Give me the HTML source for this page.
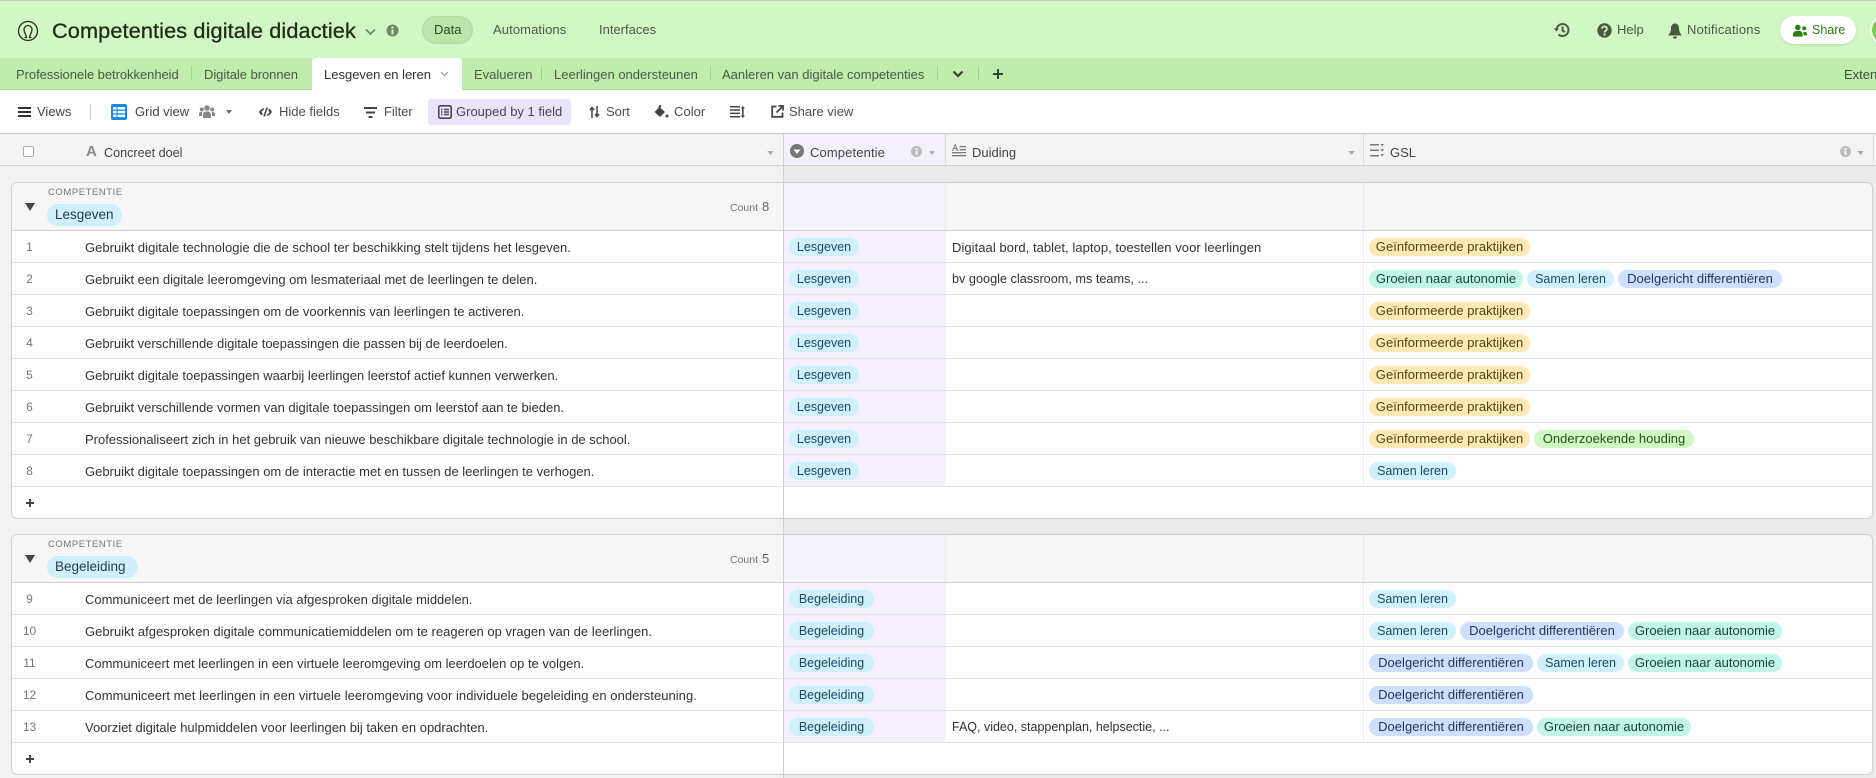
<!DOCTYPE html>
<html><head><meta charset="utf-8"><style>
html,body{margin:0;padding:0;width:1876px;height:778px;overflow:hidden;background:#f2f2f2;font-family:"Liberation Sans",sans-serif;color:#333}
.a{position:absolute}
.t{position:absolute;white-space:nowrap;font-size:13px;line-height:18px;height:18px}
svg{position:absolute;display:block}
.g{color:#4a5a44}
.tb{color:#4d4d4d}
.r{position:absolute;left:12px;width:1860px;background:#fff;border-bottom:1px solid #e3e3e3;box-sizing:content-box;height:31px}
.n{position:absolute;left:0;width:35px;text-align:center;font-size:12px;line-height:33px;color:#777}
.d{position:absolute;left:73px;font-size:13px;line-height:33px;white-space:nowrap;color:#333;letter-spacing:-.01px}
.c{position:absolute;left:772px;width:162px;height:31px;background:#f4f1fc}
.u{position:absolute;left:940px;font-size:13px;line-height:33px;white-space:nowrap;color:#333;letter-spacing:.05px}
.v{position:absolute;left:1351px;width:1px;height:31px;top:0;background:#eee}
.ps{position:absolute;left:1357px;top:7px;display:flex;gap:4px;height:18px}
.p{display:block;height:18px;line-height:18px;border-radius:9px;font-size:12.5px;text-align:center;white-space:nowrap}
.pc{position:absolute;left:777px;top:7px}
.s{width:87px;background:#d0f0fd;color:#1d4a5e}
.dd{width:164px;background:#cfdfff;color:#25355e;font-size:13px;letter-spacing:.03px}
.gr{width:154px;background:#c2f5e9;color:#16483b;font-size:13px}
.gi{width:161px;background:#ffeab6;color:#55400f;font-size:13px;letter-spacing:.03px}
.o{width:160px;background:#d1f7c4;color:#27501a;font-size:13px}
.l{width:70px;background:#d0f0fd;color:#1d4a5e}
.b{width:85px;background:#d0f0fd;color:#1d4a5e}
</style></head><body>
<div class="a" style="left:0;top:0;width:1876px;height:58px;background:#d1f7c4;border-top:1px solid #c6cfc3;box-sizing:border-box"></div>
<div class="a" style="left:0;top:58px;width:1876px;height:32px;background:#c0ecad;border-bottom:1px solid #aed69e;box-sizing:border-box"></div>
<div class="a" style="left:0;top:90px;width:1876px;height:44px;background:#fff;border-bottom:1px solid #ccc;box-sizing:border-box"></div>
<div class="a" style="left:0;top:134px;width:1876px;height:32px;background:#f4f4f4;border-bottom:1px solid #d2d2d2;box-sizing:border-box"></div>
<div class="a" style="left:784px;top:134px;width:161px;height:31px;background:#f4f1fc"></div>
<div class="a" style="left:784px;top:166px;width:1092px;height:612px;background:#ebebeb"></div>

<!-- top bar -->
<svg style="left:17px;top:20px" width="22" height="22" viewBox="0 0 22 22" fill="none" stroke="#2b2b1f" stroke-width="1.3"><circle cx="11" cy="11" r="9.5"/><path d="M7.5 17.5H9.5C9.5 15 7 13 7 9.5a4 4 0 0 1 8 0C15 13 12.500 15 12.500 17.500H14.500"/></svg>
<div class="t" style="left:52px;top:18px;font-size:21.7px;line-height:26px;height:26px;color:#1f2a17;-webkit-text-stroke:.3px #1f2a17;letter-spacing:.12px">Competenties digitale didactiek</div>
<svg style="left:365px;top:28px" width="11" height="8" viewBox="0 0 11 8" fill="none" stroke="#6b8a62" stroke-width="1.8"><path d="M1 1.500L5.500 6L10 1.500"/></svg>
<svg style="left:386px;top:24px" width="13" height="13" viewBox="0 0 13 13"><circle cx="6.500" cy="6.500" r="6" fill="#6f8a66"/><rect x="5.500" y="5.500" width="2" height="5" fill="#d1f7c4"/><rect x="5.500" y="2.500" width="2" height="2" fill="#d1f7c4"/></svg>
<div class="a" style="left:422px;top:16px;width:51px;height:28px;border-radius:14px;background:#bce5ab;box-shadow:inset 0 0 0 1px #b0dba0"></div>
<div class="t g" style="left:434px;top:21px;color:#2d4a23">Data</div>
<div class="t g" style="left:493px;top:21px;letter-spacing:.1px">Automations</div>
<div class="t g" style="left:599px;top:21px">Interfaces</div>

<svg style="left:1553px;top:22px" width="17" height="16" viewBox="0 0 17 16" fill="none" stroke="#4a5a40" stroke-width="2"><path d="M3.500 8a6 6 0 1 1 2 4.500"/><path d="M9.500 4.500V8.500L12 10"/><path d="M0.800 6.500H6L3.500 9.500Z" fill="#4a5a40" stroke="none"/></svg>
<svg style="left:1597px;top:23px" width="15" height="15" viewBox="0 0 15 15"><circle cx="7.500" cy="7.500" r="7.200" fill="#4a5a40"/><path d="M5 5.700a2.500 2.300 0 1 1 3.500 2.200c-.8.400-1 .7-1 1.600" fill="none" stroke="#d1f7c4" stroke-width="1.700"/><rect x="6.500" y="10.500" width="2" height="2" fill="#d1f7c4"/></svg>
<div class="t g" style="left:1617px;top:21px">Help</div>
<svg style="left:1668px;top:23px" width="14" height="16" viewBox="0 0 14 16" fill="#4a5a40"><path d="M7 .5C4 .5 3 3 3 5.500C3 9 1 10.500 .5 12.500H13.500C13 10.500 11 9 11 5.500C11 3 10 .5 7 .5Z"/><rect x="5" y="13.500" width="4" height="2" rx="1"/></svg>
<div class="t g" style="left:1687px;top:21px;letter-spacing:.2px">Notifications</div>
<div class="a" style="left:1780px;top:16px;width:76px;height:28px;border-radius:14px;background:#fff;box-shadow:0 1px 2px rgba(0,0,0,.12)"></div>
<svg style="left:1793px;top:24px" width="14" height="13" viewBox="0 0 16 14" fill="#2d7f12"><circle cx="5.500" cy="3.500" r="3.200"/><path d="M0 14V11a4 4 0 0 1 4-3.500H7A4 4 0 0 1 11 11V14Z"/><circle cx="12.800" cy="4.500" r="2.200"/><path d="M12 8.500h1.500a2.500 2.500 0 0 1 2.500 2.500V12.500H12Z"/></svg>
<div class="t" style="left:1812px;top:21px;color:#2d7f12;font-size:12.5px">Share</div>
<div class="a" style="left:1872px;top:17px;width:26px;height:26px;border-radius:50%;background:#7bc950;box-shadow:0 0 0 2px #fff"></div>

<!-- tabs -->
<div class="t g" style="left:16px;top:66px;letter-spacing:-.05px">Professionele betrokkenheid</div>
<div class="a" style="left:191px;top:66px;width:1px;height:14px;background:#a6d195"></div>
<div class="t g" style="left:204px;top:66px;letter-spacing:-.05px">Digitale bronnen</div>
<div class="a" style="left:312px;top:58px;width:150px;height:33px;background:#fff;border-radius:3px 3px 0 0"></div>
<div class="t" style="left:324px;top:66px;color:#333">Lesgeven en leren</div>
<svg style="left:440px;top:71px" width="9" height="6" viewBox="0 0 9 6" fill="none" stroke="#999" stroke-width="1.200"><path d="M1 1L4.500 4.500L8 1"/></svg>
<div class="t g" style="left:474px;top:66px">Evalueren</div>
<div class="a" style="left:541px;top:66px;width:1px;height:14px;background:#a6d195"></div>
<div class="t g" style="left:554px;top:66px">Leerlingen ondersteunen</div>
<div class="a" style="left:710px;top:66px;width:1px;height:14px;background:#a6d195"></div>
<div class="t g" style="left:722px;top:66px">Aanleren van digitale competenties</div>
<div class="a" style="left:937px;top:66px;width:1px;height:14px;background:#a6d195"></div>
<svg style="left:952px;top:70px" width="12" height="8" viewBox="0 0 12 8" fill="none" stroke="#33452c" stroke-width="2.200"><path d="M1.500 1.500L6 6L10.500 1.500"/></svg>
<div class="a" style="left:978px;top:66px;width:1px;height:14px;background:#a6d195"></div>
<svg style="left:992px;top:68px" width="12" height="12" viewBox="0 0 12 12" fill="none" stroke="#33452c" stroke-width="2"><path d="M6 1V11M1 6H11"/></svg>
<div class="t g" style="left:1844px;top:66px;color:#3f5138">Extensions</div>

<!-- toolbar -->
<svg style="left:18px;top:107px" width="13" height="10" viewBox="0 0 13 10" fill="#333"><rect width="13" height="2"/><rect y="4" width="13" height="2"/><rect y="8" width="13" height="2"/></svg>
<div class="t" style="left:37px;top:103px;color:#444;font-size:13px">Views</div>
<div class="a" style="left:90px;top:104px;width:1px;height:16px;background:#ccc"></div>
<svg style="left:111px;top:104px" width="16" height="16" viewBox="0 0 16 16"><rect width="16" height="16" rx="2" fill="#1c87e0"/><g fill="#fff"><rect x="2" y="3" width="3.500" height="2.500"/><rect x="6.500" y="3" width="7.500" height="2.500"/><rect x="2" y="6.800" width="3.500" height="2.500"/><rect x="6.500" y="6.800" width="7.500" height="2.500"/><rect x="2" y="10.600" width="3.500" height="2.500"/><rect x="6.500" y="10.600" width="7.500" height="2.500"/></g></svg>
<div class="t tb" style="left:135px;top:103px;color:#444">Grid view</div>
<svg style="left:199px;top:105px" width="16" height="13" viewBox="0 0 16 13" fill="#888"><circle cx="8" cy="3" r="2.800"/><circle cx="2.800" cy="4.500" r="2"/><circle cx="13.200" cy="4.500" r="2"/><path d="M4 13V9.500a3 3 0 0 1 3-3H9a3 3 0 0 1 3 3V13Z"/><path d="M0 11V8.500Q0 7 2 7H3V11ZM16 11V8.500Q16 7 14 7H13V11Z"/></svg>
<svg style="left:226px;top:110px" width="6" height="4" viewBox="0 0 8 5" fill="#666"><path d="M0 0H8L4 5Z"/></svg>
<svg style="left:259px;top:107px" width="13" height="10" viewBox="0 0 13 10"><path d="M0 5Q2 1.500 5.500 1L4.500 3Q3 3.500 2.500 5Q3 6 3.800 6.500L3 8.500Q1 7.500 0 5ZM13 5Q11 8.500 7.500 9L8.500 7Q10 6.500 10.500 5Q10 4 9.200 3.500L10 1.500Q12 2.500 13 5Z" fill="#444"/><path d="M8.200 .5L5 9.500" stroke="#444" stroke-width="1.600"/></svg>
<div class="t tb" style="left:279px;top:103px">Hide fields</div>
<svg style="left:364px;top:107px" width="13" height="11" viewBox="0 0 13 11" fill="#444"><rect width="13" height="2"/><rect x="2" y="4.500" width="9" height="2"/><rect x="4.500" y="9" width="4" height="2"/></svg>
<div class="t tb" style="left:384px;top:103px;letter-spacing:-.05px">Filter</div>
<div class="a" style="left:428px;top:99px;width:143px;height:26px;background:#ebe3fa;border-radius:3px"></div>
<svg style="left:438px;top:105px" width="14" height="14" viewBox="0 0 14 14" fill="none" stroke="#4a4650" stroke-width="1.600"><rect x=".8" y=".8" width="12.400" height="12.400" rx="1.500"/><path d="M3 4.500H4.500M6 4.500H11M3 7H4.500M6 7H11M3 9.500H4.500M6 9.500H11"/></svg>
<div class="t tb" style="left:456px;top:103px;color:#4a4650">Grouped by 1 field</div>
<svg style="left:589px;top:106px" width="11" height="12" viewBox="0 0 11 12" fill="none" stroke="#444" stroke-width="1.500"><path d="M3 12V2M1 4L3 1.500L5 4M8 0V10M6 8L8 10.500L10 8"/></svg>
<div class="t tb" style="left:606px;top:103px">Sort</div>
<svg style="left:654px;top:104px" width="15" height="15" viewBox="0 0 15 15" fill="#444"><path d="M5.500 3L11 8L6 13L.5 8Z"/><circle cx="13" cy="12" r="1.500"/><path d="M4 3.500L5.500 1H7.500L6.500 4Z"/></svg>
<div class="t tb" style="left:674px;top:103px;letter-spacing:.05px">Color</div>
<svg style="left:730px;top:106px" width="15" height="12" viewBox="0 0 15 12" fill="#444"><rect width="10" height="1.500"/><rect y="3.300" width="10" height="1.500"/><rect y="6.600" width="10" height="1.500"/><rect y="10" width="10" height="1.500"/><rect x="12" y="2" width="1.600" height="8"/><path d="M12.800 0L15 2.500H10.600ZM12.800 12L15 9.500H10.600Z"/></svg>
<svg style="left:771px;top:105px" width="13" height="13" viewBox="0 0 13 13" fill="none" stroke="#444" stroke-width="1.800"><path d="M5.500 1.500H1.200V11.800H11.500V7.500"/><path d="M5.500 7.500L11 2"/><path d="M7.500 .9H12V5.500" stroke-width="1.800"/></svg>
<div class="t tb" style="left:789px;top:103px">Share view</div>

<!-- header -->
<div class="a" style="left:23px;top:146px;width:9px;height:9px;border:1px solid #aaa;border-radius:2px;background:#fff"></div>
<div class="t" style="left:86px;top:143px;font-size:15px;color:#888;font-weight:bold;line-height:18px">A</div>
<div class="t" style="left:104px;top:144px;font-size:12.6px;color:#444">Concreet doel</div>
<svg style="left:767px;top:151px" width="7" height="4" viewBox="0 0 8 5" fill="#aaa"><path d="M0 0H8L4 5Z"/></svg>
<div class="a" style="left:783px;top:134px;width:1px;height:644px;background:#cfcfcf"></div>
<div class="a" style="left:945px;top:134px;width:1px;height:32px;background:#ddd"></div>
<div class="a" style="left:1363px;top:134px;width:1px;height:32px;background:#ddd"></div>
<div class="a" style="left:1873px;top:134px;width:1px;height:32px;background:#ddd"></div>
<svg style="left:790px;top:144px" width="14" height="14" viewBox="0 0 14 14"><circle cx="7" cy="7" r="7" fill="#777"/><path d="M3.500 5.500H10.500L7 10Z" fill="#fff"/></svg>
<div class="t" style="left:810px;top:144px;font-size:13px;color:#444;letter-spacing:.12px">Competentie</div>
<svg style="left:911px;top:146px" width="11" height="11" viewBox="0 0 11 11"><circle cx="5.500" cy="5.500" r="5.500" fill="#bbb"/><rect x="4.500" y="4.500" width="2" height="4.500" fill="#f4f1fc"/><rect x="4.500" y="2" width="2" height="1.800" fill="#f4f1fc"/></svg>
<svg style="left:929px;top:151px" width="6" height="4" viewBox="0 0 8 5" fill="#aaa"><path d="M0 0H8L4 5Z"/></svg>
<svg style="left:952px;top:144px" width="14" height="13" viewBox="0 0 14 13" fill="#777"><path d="M3 0L0 7H1.300L2 5H4.200L5 7H6.200L3.500 0ZM2.300 4L3.100 1.800L3.900 4Z"/><rect x="7.500" y="2" width="6.500" height="1.300"/><rect x="7.500" y="5" width="6.500" height="1.300"/><rect y="8" width="14" height="1.300"/><rect y="11" width="14" height="1.300"/></svg>
<div class="t" style="left:972px;top:144px;font-size:13px;color:#444">Duiding</div>
<svg style="left:1348px;top:151px" width="7" height="4" viewBox="0 0 8 5" fill="#aaa"><path d="M0 0H8L4 5Z"/></svg>
<svg style="left:1370px;top:144px" width="14" height="13" viewBox="0 0 14 13" fill="#777"><rect width="9" height="1.500"/><rect y="5.500" width="9" height="1.500"/><rect y="11" width="9" height="1.500"/><path d="M10.500 0H14L12.200 2.500ZM10.500 5H14L12.200 7.500ZM10.500 10H14L12.200 12.500Z"/></svg>
<div class="t" style="left:1390px;top:144px;font-size:13px;color:#444">GSL</div>
<svg style="left:1840px;top:146px" width="11" height="11" viewBox="0 0 11 11"><circle cx="5.500" cy="5.500" r="5.500" fill="#bbb"/><rect x="4.500" y="4.500" width="2" height="4.500" fill="#f4f4f4"/><rect x="4.500" y="2" width="2" height="1.800" fill="#f4f4f4"/></svg>
<svg style="left:1857px;top:151px" width="7" height="4" viewBox="0 0 8 5" fill="#aaa"><path d="M0 0H8L4 5Z"/></svg>

<!-- GROUP 1 -->
<div class="a" style="left:11px;top:182px;width:1862px;height:337px;border:1px solid #cfcfcf;border-radius:6px;box-sizing:border-box;background:#fff;overflow:hidden">
  <div class="a" style="left:0;top:0;width:100%;height:47px;background:#f6f6f6;border-bottom:1px solid #d2d2d2"></div>
  <div class="a" style="left:771px;top:0;width:162px;height:47px;background:#f4f3f9"></div>
  <div class="a" style="left:933px;top:0;width:1px;height:47px;background:#eaeaea"></div>
  <div class="a" style="left:1351px;top:0;width:1px;height:47px;background:#eaeaea"></div>
</div>
<svg style="left:25px;top:203px" width="10" height="8" viewBox="0 0 10 8" fill="#444"><path d="M0 0H10L5 8Z"/></svg>
<div class="t" style="left:48px;top:184px;font-size:9.500px;color:#777;letter-spacing:.55px">COMPETENTIE</div>
<div class="a" style="left:47px;top:204px;width:75px;height:22px;border-radius:11px;background:#d0f0fd"></div>
<div class="t" style="left:55px;top:206px;font-size:13.500px;color:#1d3a4e">Lesgeven</div>
<div class="t" style="left:730px;top:198px;font-size:10.500px;color:#777">Count <span style="font-size:13px;color:#666;margin-left:1px">8</span></div>

<div class="r" style="top:231px"><div class="n">1</div><div class="d" style="letter-spacing:.02px">Gebruikt digitale technologie die de school ter beschikking stelt tijdens het lesgeven.</div><div class="c"></div><div class="p pc l">Lesgeven</div><div class="u">Digitaal bord, tablet, laptop, toestellen voor leerlingen</div><div class="v"></div><div class="ps"><span class="p gi">Geïnformeerde praktijken</span></div></div>
<div class="r" style="top:263px"><div class="n">2</div><div class="d">Gebruikt een digitale leeromgeving om lesmateriaal met de leerlingen te delen.</div><div class="c"></div><div class="p pc l">Lesgeven</div><div class="u" style="font-size:12.7px;letter-spacing:0">bv google classroom, ms teams, ...</div><div class="v"></div><div class="ps"><span class="p gr">Groeien naar autonomie</span><span class="p s">Samen leren</span><span class="p dd">Doelgericht differentiëren</span></div></div>
<div class="r" style="top:295px"><div class="n">3</div><div class="d">Gebruikt digitale toepassingen om de voorkennis van leerlingen te activeren.</div><div class="c"></div><div class="p pc l">Lesgeven</div><div class="v"></div><div class="ps"><span class="p gi">Geïnformeerde praktijken</span></div></div>
<div class="r" style="top:327px"><div class="n">4</div><div class="d">Gebruikt verschillende digitale toepassingen die passen bij de leerdoelen.</div><div class="c"></div><div class="p pc l">Lesgeven</div><div class="v"></div><div class="ps"><span class="p gi">Geïnformeerde praktijken</span></div></div>
<div class="r" style="top:359px"><div class="n">5</div><div class="d">Gebruikt digitale toepassingen waarbij leerlingen leerstof actief kunnen verwerken.</div><div class="c"></div><div class="p pc l">Lesgeven</div><div class="v"></div><div class="ps"><span class="p gi">Geïnformeerde praktijken</span></div></div>
<div class="r" style="top:391px"><div class="n">6</div><div class="d">Gebruikt verschillende vormen van digitale toepassingen om leerstof aan te bieden.</div><div class="c"></div><div class="p pc l">Lesgeven</div><div class="v"></div><div class="ps"><span class="p gi">Geïnformeerde praktijken</span></div></div>
<div class="r" style="top:423px"><div class="n">7</div><div class="d">Professionaliseert zich in het gebruik van nieuwe beschikbare digitale technologie in de school.</div><div class="c"></div><div class="p pc l">Lesgeven</div><div class="v"></div><div class="ps"><span class="p gi">Geïnformeerde praktijken</span><span class="p o">Onderzoekende houding</span></div></div>
<div class="r" style="top:455px"><div class="n">8</div><div class="d">Gebruikt digitale toepassingen om de interactie met en tussen de leerlingen te verhogen.</div><div class="c"></div><div class="p pc l">Lesgeven</div><div class="v"></div><div class="ps"><span class="p s">Samen leren</span></div></div>
<svg style="left:26px;top:499px" width="8" height="8" viewBox="0 0 10 10" fill="none" stroke="#444" stroke-width="2.400"><path d="M5 0V10M0 5H10"/></svg>

<!-- GROUP 2 -->
<div class="a" style="left:11px;top:534px;width:1862px;height:241px;border:1px solid #cfcfcf;border-radius:6px;box-sizing:border-box;background:#fff;overflow:hidden">
  <div class="a" style="left:0;top:0;width:100%;height:47px;background:#f6f6f6;border-bottom:1px solid #d2d2d2"></div>
  <div class="a" style="left:771px;top:0;width:162px;height:47px;background:#f4f3f9"></div>
  <div class="a" style="left:933px;top:0;width:1px;height:47px;background:#eaeaea"></div>
  <div class="a" style="left:1351px;top:0;width:1px;height:47px;background:#eaeaea"></div>
</div>
<svg style="left:25px;top:555px" width="10" height="8" viewBox="0 0 10 8" fill="#444"><path d="M0 0H10L5 8Z"/></svg>
<div class="t" style="left:48px;top:536px;font-size:9.500px;color:#777;letter-spacing:.55px">COMPETENTIE</div>
<div class="a" style="left:47px;top:556px;width:91px;height:22px;border-radius:11px;background:#d0f0fd"></div>
<div class="t" style="left:55px;top:558px;font-size:13.500px;color:#1d3a4e">Begeleiding</div>
<div class="t" style="left:730px;top:550px;font-size:10.500px;color:#777">Count <span style="font-size:13px;color:#666;margin-left:1px">5</span></div>

<div class="r" style="top:583px"><div class="n">9</div><div class="d">Communiceert met de leerlingen via afgesproken digitale middelen.</div><div class="c"></div><div class="p pc b">Begeleiding</div><div class="v"></div><div class="ps"><span class="p s">Samen leren</span></div></div>
<div class="r" style="top:615px"><div class="n">10</div><div class="d" style="letter-spacing:.02px">Gebruikt afgesproken digitale communicatiemiddelen om te reageren op vragen van de leerlingen.</div><div class="c"></div><div class="p pc b">Begeleiding</div><div class="v"></div><div class="ps"><span class="p s">Samen leren</span><span class="p dd">Doelgericht differentiëren</span><span class="p gr">Groeien naar autonomie</span></div></div>
<div class="r" style="top:647px"><div class="n">11</div><div class="d">Communiceert met leerlingen in een virtuele leeromgeving om leerdoelen op te volgen.</div><div class="c"></div><div class="p pc b">Begeleiding</div><div class="v"></div><div class="ps"><span class="p dd">Doelgericht differentiëren</span><span class="p s">Samen leren</span><span class="p gr">Groeien naar autonomie</span></div></div>
<div class="r" style="top:679px"><div class="n">12</div><div class="d" style="letter-spacing:.04px">Communiceert met leerlingen in een virtuele leeromgeving voor individuele begeleiding en ondersteuning.</div><div class="c"></div><div class="p pc b">Begeleiding</div><div class="v"></div><div class="ps"><span class="p dd">Doelgericht differentiëren</span></div></div>
<div class="r" style="top:711px"><div class="n">13</div><div class="d">Voorziet digitale hulpmiddelen voor leerlingen bij taken en opdrachten.</div><div class="c"></div><div class="p pc b">Begeleiding</div><div class="u" style="font-size:12.5px;letter-spacing:0">FAQ, video, stappenplan, helpsectie, ...</div><div class="v"></div><div class="ps"><span class="p dd">Doelgericht differentiëren</span><span class="p gr">Groeien naar autonomie</span></div></div>
<svg style="left:26px;top:755px" width="8" height="8" viewBox="0 0 10 10" fill="none" stroke="#444" stroke-width="2.400"><path d="M5 0V10M0 5H10"/></svg>

<div class="a" style="left:783px;top:166px;width:1px;height:612px;background:#cfcfcf"></div>
</body></html>
